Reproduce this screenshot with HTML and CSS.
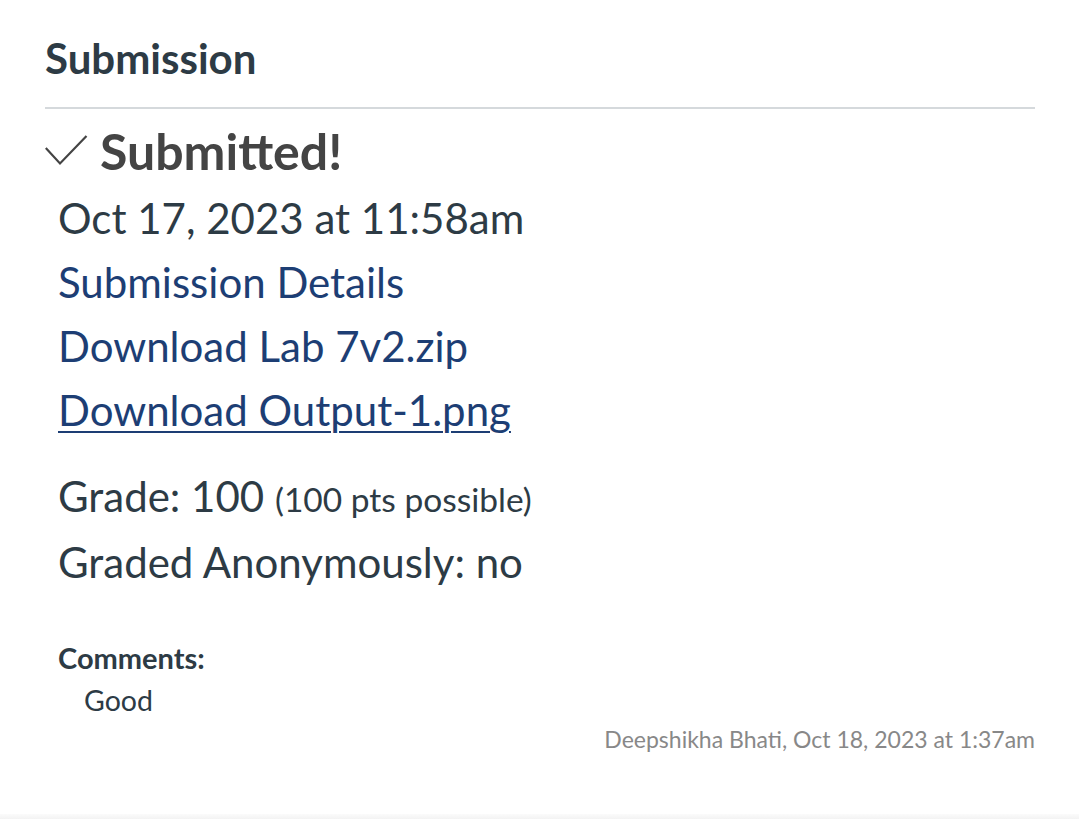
FILE: index.html
```html
<!DOCTYPE html>
<html>
<head>
<meta charset="utf-8">
<link rel="stylesheet" href="styles.css">
</head>
<body>
<div class="page">
  <section class="sidebar">
    <h2 class="title">Submission</h2>
    <div class="status">
      <svg class="check" width="44" height="32" viewBox="0 0 44 32"><path d="M0.8 14 L15 29.5 L41.5 2" fill="none" stroke="#444" stroke-width="2.2"/></svg>
      <span class="status-text">Submitted!</span>
    </div>
    <div class="details">
      <div class="line">Oct 17, 2023 at 11:58am</div>
      <div class="line"><a class="link" href="#">Submission Details</a></div>
      <div class="line"><a class="link" href="#">Download Lab 7v2.zip</a></div>
      <div class="line"><a class="link underline" href="#">Download Output-1.png</a></div>
    </div>
    <div class="grade">
      <div class="line">Grade: 100 <span class="small">(100 pts possible)</span></div>
      <div class="line">Graded Anonymously: no</div>
    </div>
    <div class="comments">
      <div class="comments-label">Comments:</div>
      <div class="comment-text">Good</div>
      <div class="comment-meta">Deepshikha Bhati, Oct 18, 2023 at 1:37am</div>
    </div>
  </section>
  <div class="bottom-band"></div>
</div>
</body>
</html>
```
FILE: styles.css
```css
html, body {
  margin: 0;
  padding: 0;
  background: #fff;
}
body {
  font-family: Lato, "Liberation Sans", sans-serif;
  color: #2d3b45;
}
.page {
  width: 1079px;
  height: 819px;
  display: flex;
  flex-direction: column;
  overflow: hidden;
}
.sidebar {
  flex: 1;
  padding: 28px 44px 0 45px;
}
.title {
  margin: 0;
  font-size: 42px;
  font-weight: 700;
  line-height: 60px;
  padding-bottom: 19px;
  border-bottom: 2px solid #d5d9dc;
  color: #2d3b45;
}
.status {
  display: flex;
  align-items: flex-start;
  margin-top: 13px;
  height: 58px;
}
.check {
  display: block;
  margin-right: 11px;
  margin-top: 12px;
  flex: none;
}
.status-text {
  font-size: 50px;
  font-weight: 700;
  color: #444;
  line-height: 58px;
}
.details {
  padding-left: 13px;
  margin-top: 6px;
}
.line {
  font-size: 42px;
  line-height: 64px;
  color: #2d3b45;
  white-space: nowrap;
}
.grade .line + .line {
  margin-top: -1px;
}
.link {
  color: #1d3e74;
  text-decoration: none;
}
.link.underline {
  text-decoration: underline;
  text-decoration-thickness: 2px;
  text-underline-offset: 5px;
}
.grade {
  padding-left: 13px;
  margin-top: 22px;
}
.small {
  font-size: 33.5px;
}
.comments {
  padding-left: 13px;
  margin-top: 46px;
}
.comments-label {
  font-size: 29px;
  font-weight: 700;
  line-height: 36px;
}
.comment-text {
  font-size: 28.5px;
  line-height: 48px;
  padding-left: 26px;
}
.comment-meta {
  text-align: right;
  font-size: 23px;
  color: #888;
  line-height: 30px;
}
.bottom-band {
  height: 5px;
  background: linear-gradient(#fbfbfb, #f3f3f3);
}
```
